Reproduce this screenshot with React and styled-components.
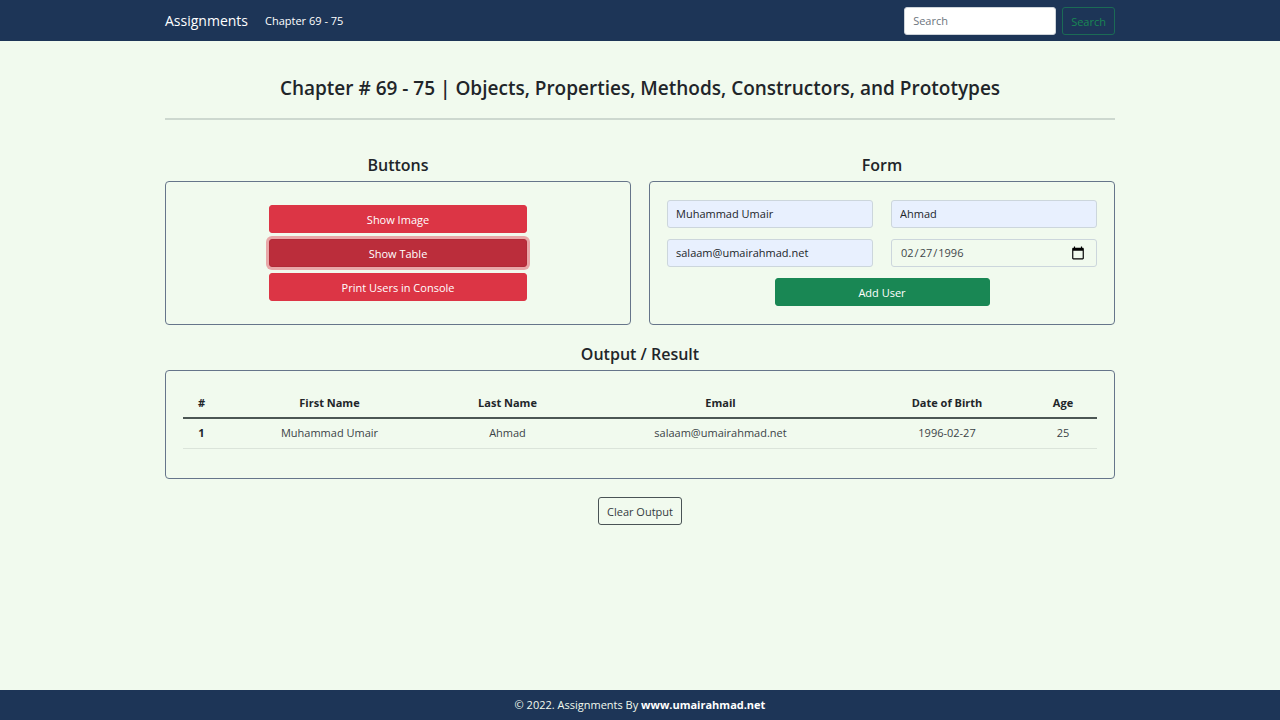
import React from "react";
import styled, { createGlobalStyle, css } from "styled-components";

const navy = "#1d3557";
const mint = "#f1faee";
const ink = "#212529";

const GlobalStyle = createGlobalStyle`
  *, *::before, *::after { box-sizing: border-box; }
  body {
    margin: 0;
    background: ${mint};
    color: ${ink};
    font-family: "Segoe UI", "Open Sans", "Noto Sans", sans-serif;
    font-size: 11px;
    line-height: 18px;
  }
  h1, h2, p { margin: 0; }
  button, input { font: inherit; }
`;

const Page = styled.div`
  display: flex;
  flex-direction: column;
  min-height: 100vh;
`;

const Container = styled.div`
  width: 100%;
  max-width: 974px;
  margin: 0 auto;
  padding: 0 12px;
`;

const NavBar = styled.header`
  background: ${navy};
  padding: 7px 0 6px;
`;

const NavRow = styled(Container)`
  display: flex;
  align-items: center;
  justify-content: space-between;
`;

const NavLinks = styled.nav`
  display: flex;
  align-items: center;
  gap: 17px;
`;

const NavLink = styled.a`
  color: #fff;
  text-decoration: none;
  font-size: ${(p) => (p.$brand ? "14px" : "11px")};
`;

const SearchForm = styled.form`
  display: flex;
  gap: 6px;
`;

const TextField = styled.input`
  width: 100%;
  min-width: 0;
  height: 28px;
  padding: 3px 8px 4px;
  border: 1px solid ${(p) => (p.$plain ? "#ced4da" : "#ccd6dc")};
  border-radius: 3px;
  background: ${(p) => (p.$filled ? "#e8f0fe" : p.$plain ? "#fff" : "transparent")};
  color: ${(p) => (p.type === "date" ? "#3f474a" : ink)};
  &::placeholder { color: #6c757d; opacity: 1; }
  &::-webkit-calendar-picker-indicator {
    width: 14px;
    height: 14px;
    padding: 0;
    margin-right: 3px;
    background-size: 14px 14px;
  }
`;

const SearchField = styled(TextField)`
  width: 152px;
`;

const variants = {
  danger: css`
    background: #dc3545;
    border-color: #dc3545;
    color: #fff;
  `,
  active: css`
    background: #bb2d3b;
    border-color: #b02a37;
    color: #fff;
    box-shadow: 0 0 0 3px rgba(225, 83, 97, 0.5);
  `,
  success: css`
    background: #198754;
    border-color: #198754;
    color: #fff;
  `,
  outlineSuccess: css`
    border-color: #1b6b55;
    color: #198754;
  `,
  outlineDark: css`
    border-color: #4a5355;
    color: #343b3e;
  `,
};

const Button = styled.button`
  height: 28px;
  padding: 5px 8px 3px;
  border: 1px solid transparent;
  border-radius: 3px;
  background: transparent;
  cursor: pointer;
  white-space: nowrap;
  ${(p) => variants[p.$variant]}
`;

const Main = styled.main`
  flex: 1;
`;

const PageTitle = styled.h1`
  padding: 34px 0 16px;
  border-bottom: 2px solid #cdd8cf;
  font-size: 19px;
  font-weight: 600;
  line-height: 27px;
  text-align: center;
`;

const Columns = styled.div`
  display: grid;
  grid-template-columns: 1fr 1fr;
  gap: 18px;
  padding: 34px 0 18px;
`;

const Section = styled.section`
  display: flex;
  flex-direction: column;
`;

const SectionTitle = styled.h2`
  padding-bottom: 4px;
  font-size: 16px;
  font-weight: 600;
  line-height: 23px;
  text-align: center;
`;

const Panel = styled.div`
  flex: 1;
  padding: 18px 17px;
  border: 1px solid #66758a;
  border-radius: 4px;
`;

const OutputPanel = styled(Panel)`
  padding: 17px;
`;

const ButtonStack = styled.div`
  display: grid;
  gap: 6px;
  width: 60%;
  margin: 0 auto;
  padding: 5px 0;
`;

const UserForm = styled.form`
  display: grid;
  grid-template-columns: 1fr 1fr;
  gap: 11px 18px;
`;

const SubmitButton = styled(Button)`
  grid-column: 1 / -1;
  justify-self: center;
  width: 50%;
`;

const Table = styled.table`
  width: 100%;
  table-layout: fixed;
  border-collapse: collapse;
  margin-bottom: 12px;
  text-align: center;

  th, td { height: 30px; padding: 0; }
  td { color: #3b4346; }
  thead tr { border-bottom: 2px solid #4c5754; }
  tbody tr { border-bottom: 1px solid #dbe4da; }
`;

const Actions = styled.div`
  display: flex;
  justify-content: center;
  padding: 18px 0;
`;

const Footer = styled.footer`
  padding: 6px 0;
  background: ${navy};
  color: ${mint};
  text-align: center;

  a { color: #fff; font-weight: 700; text-decoration: none; }
`;

const columns = [
  ["#", 37],
  ["First Name", 219],
  ["Last Name", 137],
  ["Email", 289],
  ["Date of Birth", 164],
  ["Age", 68],
];

const users = [
  ["Muhammad Umair", "Ahmad", "salaam@umairahmad.net", "1996-02-27", "25"],
];

const stop = (e) => e.preventDefault();

export default function App() {
  return (
    <Page>
      <GlobalStyle />
      <NavBar>
        <NavRow>
          <NavLinks>
            <NavLink href="#" $brand>Assignments</NavLink>
            <NavLink href="#">Chapter 69 - 75</NavLink>
          </NavLinks>
          <SearchForm role="search" onSubmit={stop}>
            <SearchField type="search" placeholder="Search" aria-label="Search" $plain />
            <Button type="submit" $variant="outlineSuccess">Search</Button>
          </SearchForm>
        </NavRow>
      </NavBar>

      <Main>
        <Container>
          <PageTitle>
            Chapter # 69 - 75 | Objects, Properties, Methods, Constructors, and Prototypes
          </PageTitle>

          <Columns>
            <Section>
              <SectionTitle>Buttons</SectionTitle>
              <Panel>
                <ButtonStack>
                  <Button type="button" $variant="danger">Show Image</Button>
                  <Button type="button" $variant="active">Show Table</Button>
                  <Button type="button" $variant="danger">Print Users in Console</Button>
                </ButtonStack>
              </Panel>
            </Section>
            <Section>
              <SectionTitle>Form</SectionTitle>
              <Panel>
                <UserForm onSubmit={stop}>
                  <TextField type="text" aria-label="First name" defaultValue="Muhammad Umair" $filled />
                  <TextField type="text" aria-label="Last name" defaultValue="Ahmad" $filled />
                  <TextField type="email" aria-label="Email" defaultValue="salaam@umairahmad.net" $filled />
                  <TextField type="date" aria-label="Date of birth" defaultValue="1996-02-27" />
                  <SubmitButton type="submit" $variant="success">Add User</SubmitButton>
                </UserForm>
              </Panel>
            </Section>
          </Columns>

          <Section>
            <SectionTitle>Output / Result</SectionTitle>
            <OutputPanel>
              <Table>
                <colgroup>
                  {columns.map(([name, width]) => <col key={name} width={width} />)}
                </colgroup>
                <thead>
                  <tr>
                    {columns.map(([name]) => <th key={name} scope="col">{name}</th>)}
                  </tr>
                </thead>
                <tbody>
                  {users.map((user, i) => (
                    <tr key={user[2]}>
                      <th scope="row">{i + 1}</th>
                      {user.map((value) => <td key={value}>{value}</td>)}
                    </tr>
                  ))}
                </tbody>
              </Table>
            </OutputPanel>
          </Section>

          <Actions>
            <Button type="button" $variant="outlineDark">Clear Output</Button>
          </Actions>
        </Container>
      </Main>

      <Footer>
        <p>© 2022. Assignments By <a href="#">www.umairahmad.net</a></p>
      </Footer>
    </Page>
  );
}
